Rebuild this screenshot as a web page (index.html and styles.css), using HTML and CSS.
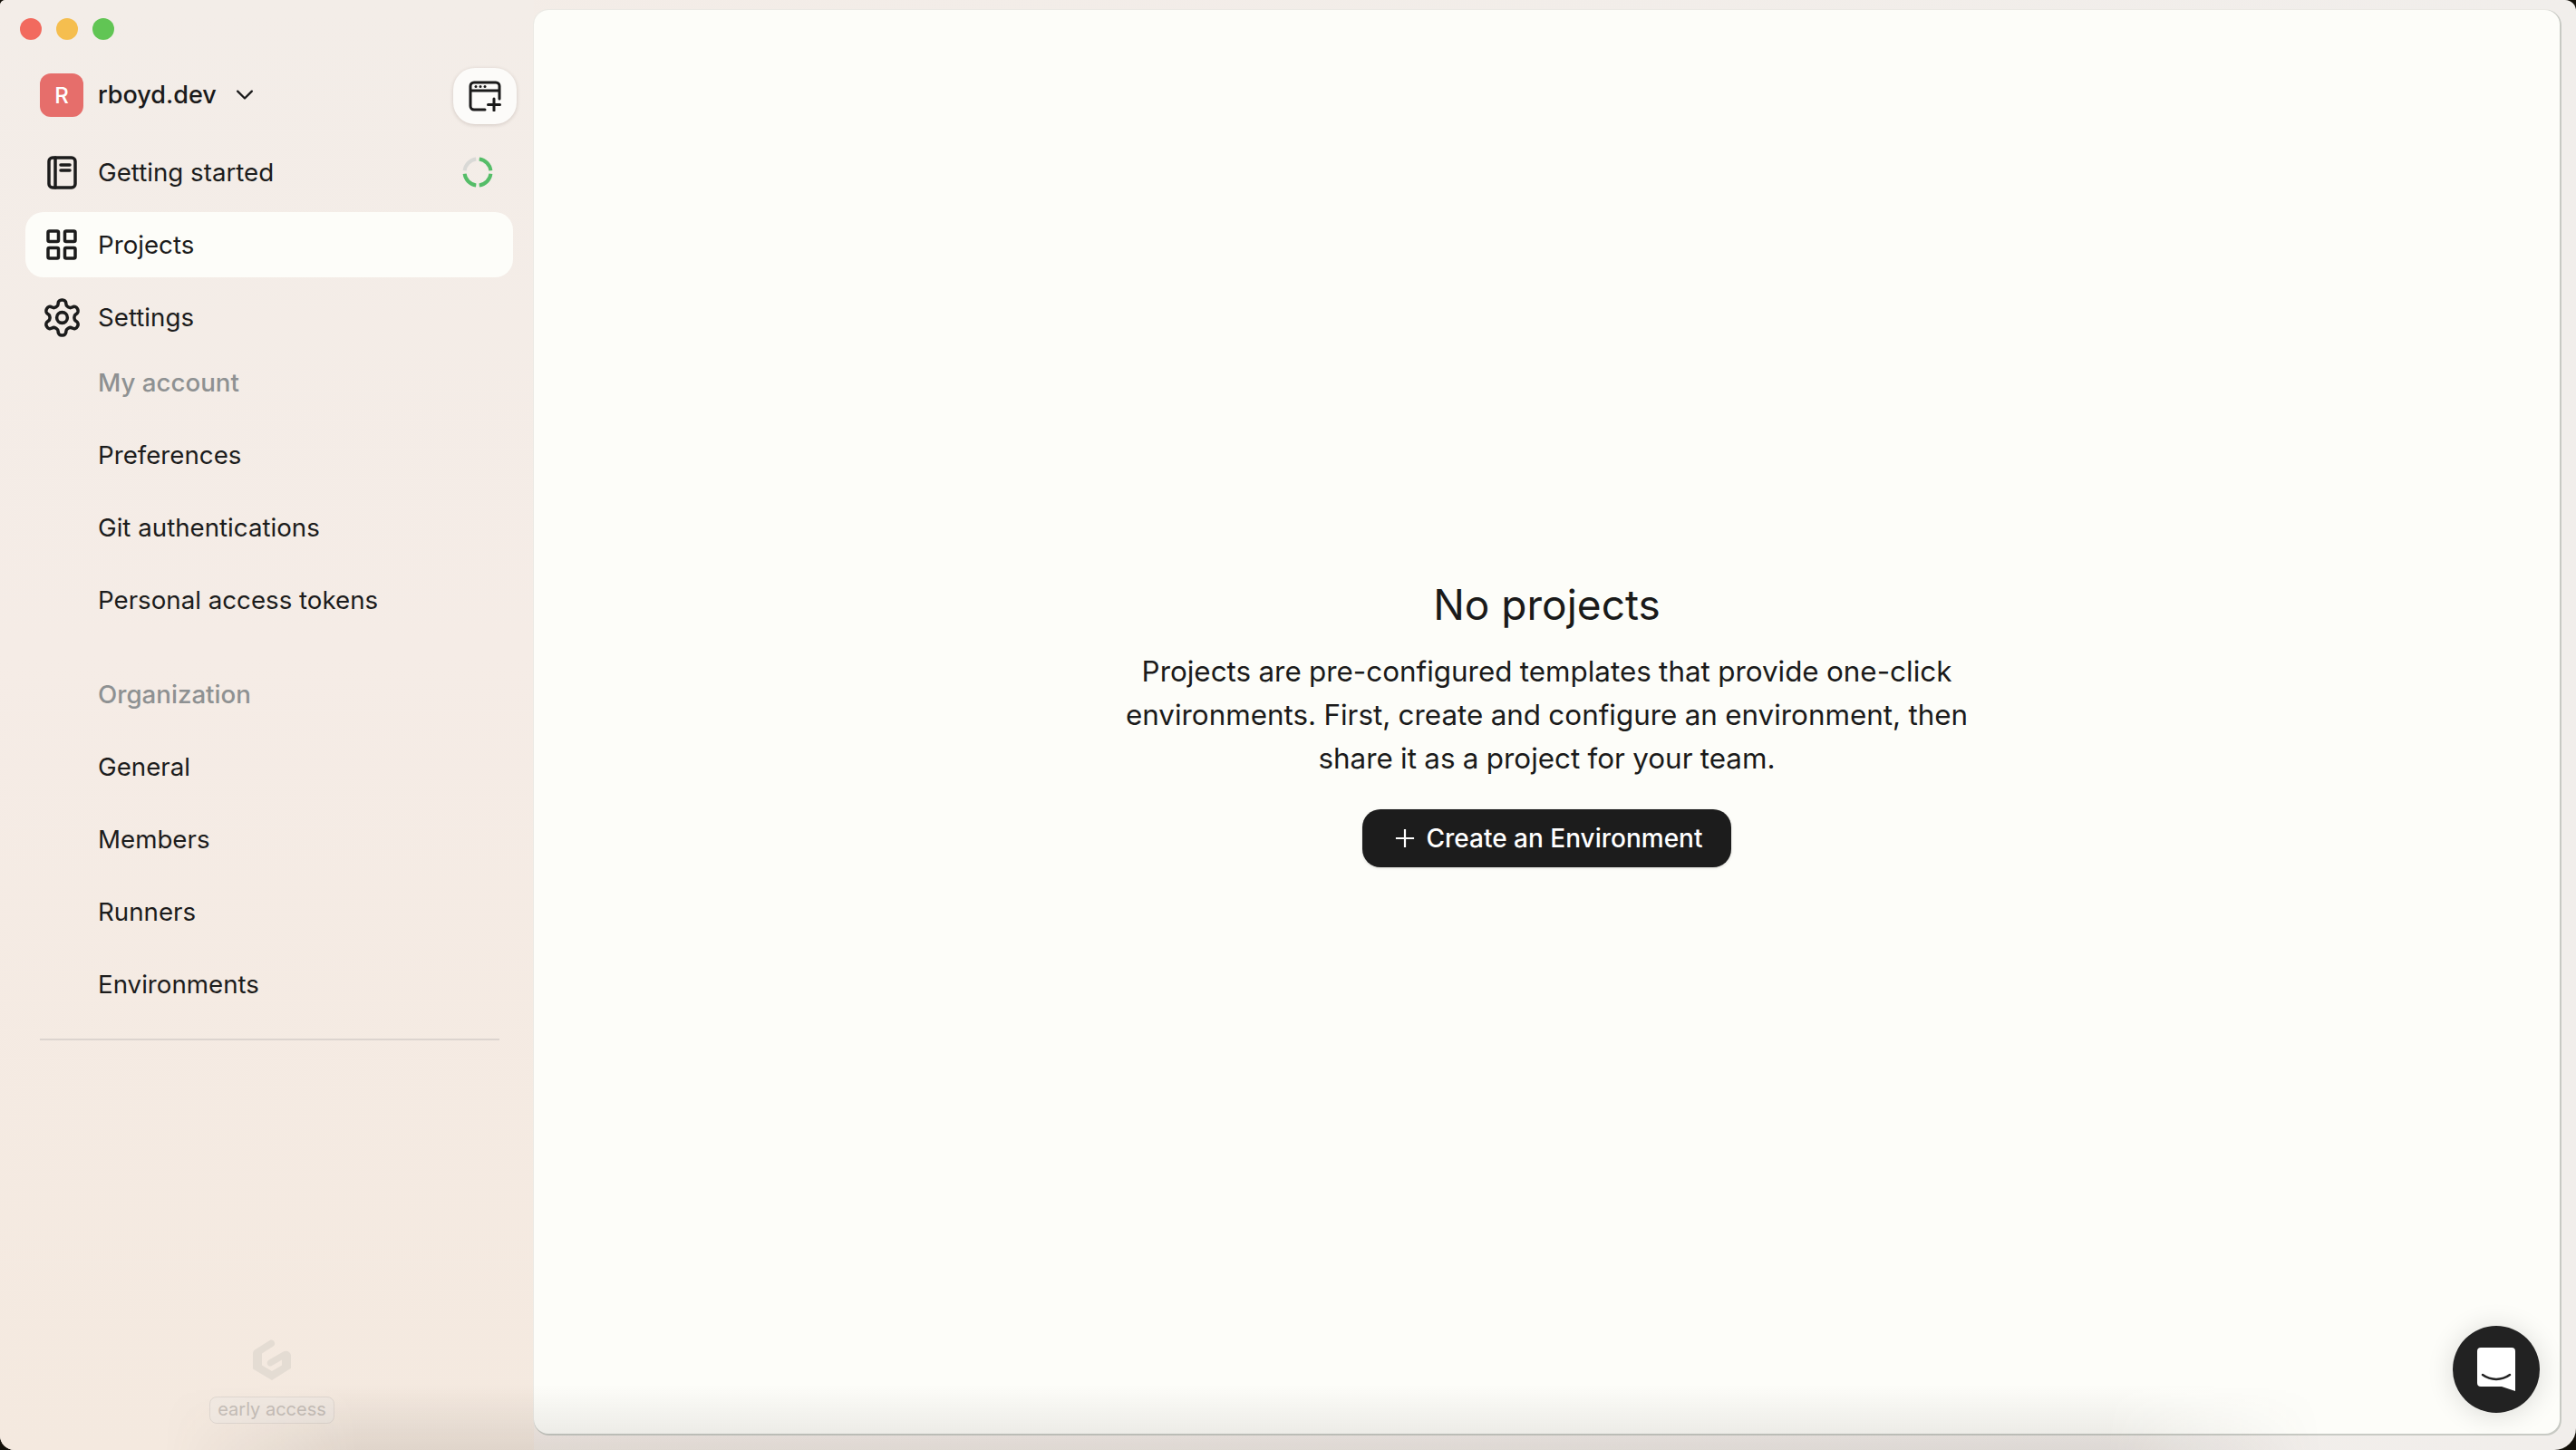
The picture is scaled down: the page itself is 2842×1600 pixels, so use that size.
FILE: index.html
```html
<!DOCTYPE html>
<html lang="en">
<head>
<meta charset="utf-8">
<title>Projects</title>
<link rel="stylesheet" href="styles.css">
</head>
<body>
<div class="window">
  <aside class="sidebar">
    <div class="traffic">
      <span class="light red"></span><span class="light yellow"></span><span class="light green"></span>
    </div>
    <div class="org-row">
      <span class="avatar">R</span>
      <span class="org-name">rboyd.dev</span>
      <svg class="chevron" viewBox="0 0 24 16"><path d="M3 3l9 9 9-9"/></svg>
      <button class="new-env">
        <svg viewBox="0 0 36 34" class="new-env-icon">
          <path d="M34 20V6a4 4 0 0 0-4-4H6a4 4 0 0 0-4 4v22a4 4 0 0 0 4 4h12M2 11h32M28 20v13M21.500 26.500h13"/>
          <circle class="dot" cx="8" cy="6.500" r="1.500"/><circle class="dot" cx="13" cy="6.500" r="1.500"/><circle class="dot" cx="18" cy="6.500" r="1.500"/>
        </svg>
      </button>
    </div>
    <nav class="nav">
      <a class="item">
        <span class="item-icon"><svg width="33" height="37" viewBox="0 0 33 37" class="ico"><rect x="2" y="2" width="29" height="33" rx="4"/><path d="M9 2v33M15 10h10M15 16h10"/></svg></span>
        <span class="label">Getting started</span>
        <svg class="progress" viewBox="0 0 34 34">
          <circle class="seg done" cx="17" cy="17" r="14.500" pathLength="100" stroke-dasharray="21 79" stroke-dashoffset="-2"/>
          <circle class="seg done" cx="17" cy="17" r="14.500" pathLength="100" stroke-dasharray="21 79" stroke-dashoffset="-27"/>
          <circle class="seg done" cx="17" cy="17" r="14.500" pathLength="100" stroke-dasharray="21 79" stroke-dashoffset="-52"/>
          <circle class="seg todo" cx="17" cy="17" r="14.500" pathLength="100" stroke-dasharray="21 79" stroke-dashoffset="-77"/>
        </svg>
      </a>
      <a class="item active">
        <span class="item-icon"><svg width="34" height="34" viewBox="0 0 34 34" class="ico"><rect x="2" y="2" width="11.500" height="11.500" rx="1.500"/><rect x="20.500" y="2" width="11.500" height="11.500" rx="1.500"/><rect x="2" y="20.500" width="11.500" height="11.500" rx="1.500"/><rect x="20.500" y="20.500" width="11.500" height="11.500" rx="1.500"/></svg></span>
        <span class="label">Projects</span>
      </a>
      <a class="item">
        <span class="item-icon"><svg width="47" height="47" viewBox="0 0 24 24" class="ico gear"><path d="M12.220 2h-.44a2 2 0 0 0-2 2v.18a2 2 0 0 1-1 1.730l-.43.25a2 2 0 0 1-2 0l-.15-.08a2 2 0 0 0-2.730.730l-.22.38a2 2 0 0 0 .73 2.730l.15.1a2 2 0 0 1 1 1.720v.51a2 2 0 0 1-1 1.740l-.15.09a2 2 0 0 0-.73 2.730l.22.38a2 2 0 0 0 2.730.730l.15-.08a2 2 0 0 1 2 0l.43.25a2 2 0 0 1 1 1.730V20a2 2 0 0 0 2 2h.44a2 2 0 0 0 2-2v-.18a2 2 0 0 1 1-1.730l.43-.25a2 2 0 0 1 2 0l.15.08a2 2 0 0 0 2.730-.73l.22-.39a2 2 0 0 0-.73-2.730l-.15-.08a2 2 0 0 1-1-1.740v-.5a2 2 0 0 1 1-1.740l.15-.09a2 2 0 0 0 .73-2.730l-.22-.38a2 2 0 0 0-2.730-.73l-.15.08a2 2 0 0 1-2 0l-.43-.25a2 2 0 0 1-1-1.730V4a2 2 0 0 0-2-2z"/><circle cx="12" cy="12" r="3"/></svg></span>
        <span class="label">Settings</span>
      </a>
      <div class="item sub heading-item group-first"><span class="label">My account</span></div>
      <a class="item sub"><span class="label">Preferences</span></a>
      <a class="item sub"><span class="label">Git authentications</span></a>
      <a class="item sub"><span class="label">Personal access tokens</span></a>
      <div class="item sub heading-item group-start"><span class="label">Organization</span></div>
      <a class="item sub"><span class="label">General</span></a>
      <a class="item sub"><span class="label">Members</span></a>
      <a class="item sub"><span class="label">Runners</span></a>
      <a class="item sub"><span class="label">Environments</span></a>
    </nav>
    <hr class="divider">
    <div class="brand">
      <svg class="logo" viewBox="0 0 44 48"><path fill-rule="evenodd" d="M3 13.500 20 2.800c3.500-2 7.500 3.800 3.500 6.800L11 17.500v13L22 37l11-6.500v-6L22 31c-4 2.500-7.500-3.500-3.500-6.300L34.500 15.500c3.500-2 8 .2 8.500 4v14.300L22 47 1 34.500V17.500c0-1.500.8-3 2-4z"/></svg>
      <span class="badge">early access</span>
    </div>
  </aside>
  <main class="panel">
    <div class="empty">
      <h1 class="empty-title">No projects</h1>
      <p class="empty-text">Projects are pre-configured templates that provide one-click environments. First, create and configure an environment, then share it as a project for your team.</p>
      <button class="cta">
        <svg class="cta-plus" viewBox="0 0 24 24"><path d="M12 1v22M1 12h22"/></svg>
        <span>Create an Environment</span>
      </button>
    </div>
    <button class="chat">
      <svg viewBox="0 0 42 48" class="chat-icon"><path d="M4 0h34a4 4 0 0 1 4 4v44l-15-5H4a4 4 0 0 1-4-4V4a4 4 0 0 1 4-4z" fill="#fff"/><path d="M6 30c9 6.500 21 6.500 30 0" fill="none" stroke="#222" stroke-width="2.500" stroke-linecap="round"/></svg>
    </button>
  </main>
  <div class="bottom-shade"></div>
</div>
</body>
</html>
```

FILE: styles.css
```css
* { box-sizing: border-box; }
html, body { margin: 0; height: 100%; background: #14110a; overflow: hidden; }
body { font-family: Inter, "Liberation Sans", sans-serif; color: #1a1a1a; }

.window {
  position: relative;
  display: flex;
  width: 2842px;
  height: 1600px;
  padding: 11px 18px 18px 0;
  border-radius: 6px 12px 24px 16px;
  overflow: hidden;
  background: linear-gradient(90deg, #f4ece6 0%, #f1eeeb 100%);
}

.sidebar {
  position: relative;
  display: flex;
  flex-direction: column;
  width: 589px;
  flex: none;
  margin: -11px 0 -18px;
  padding: 0 23px 29px 28px;
  background: linear-gradient(180deg, #f3ede8 0%, #f5ece6 45%, #f4e9df 100%);
}

.traffic { display: flex; gap: 16px; padding: 20px 0 0; margin-left: -6px; height: 68px; flex: none; }
.light { width: 24px; height: 24px; border-radius: 50%; }
.red { background: #f26a5e; }
.yellow { background: #f5be4f; }
.green { background: #61c554; }

.org-row {
  display: flex;
  align-items: center;
  height: 74px;
  padding-left: 16px;
  flex: none;
}
.avatar {
  width: 48px;
  height: 48px;
  border-radius: 12px;
  background: #e66e6b;
  color: #fff;
  font-size: 24px;
  font-weight: 500;
  display: flex;
  align-items: center;
  justify-content: center;
  flex: none;
}
.org-name { margin-left: 16px; font-size: 27px; font-weight: 500; line-height: 48px; }
.chevron { width: 22px; height: 14px; margin-left: 20px; fill: none; stroke: #1a1a1a; stroke-width: 2.600; stroke-linecap: round; stroke-linejoin: round; }
.new-env {
  margin-left: auto;
  margin-right: -4px;
  margin-top: 2px;
  width: 70px;
  height: 62px;
  padding: 0;
  border: 0;
  border-radius: 24px;
  background: #fcfbf9;
  box-shadow: 0 1px 4px rgba(60, 40, 30, .18);
  display: flex;
  align-items: center;
  justify-content: center;
}
.new-env-icon { width: 36px; height: 34px; fill: none; stroke: #1a1a1a; stroke-width: 3; stroke-linecap: round; stroke-linejoin: round; }
.new-env-icon .dot { fill: #1a1a1a; stroke: none; }

.nav { display: flex; flex-direction: column; gap: 8px; margin-top: 12px; flex: none; }
.item {
  display: flex;
  align-items: center;
  height: 72px;
  padding-left: 16px;
  border-radius: 20px;
  gap: 16px;
  font-size: 27.700px;
  line-height: 40px;
  color: #1c1c1c;
}
.item.active { background: #fdfdf9; }
.item.sub { padding-left: 80px; }
.item.heading-item { color: #8e9192; font-weight: 500; }
.item.group-first { margin-top: -8px; }
.item.group-start { margin-top: 24px; }
.item-icon { width: 48px; height: 48px; display: flex; align-items: center; justify-content: center; flex: none; }
.ico { fill: none; stroke: #1c1c1c; stroke-width: 3.500; stroke-linecap: round; stroke-linejoin: round; }
.ico.gear { stroke-width: 1.800; }
.progress { width: 34px; height: 34px; margin-left: auto; margin-right: 22px; transform: rotate(-90deg); }
.seg { fill: none; stroke-width: 4; }
.seg.done { stroke: #55bd68; }
.seg.todo { stroke: #d9d9d6; }

.divider { width: 507px; height: 2px; margin: 24px 0 0 16px; border: 0; background: #dcd4cf; flex: none; }

.brand {
  margin-top: auto;
  margin-left: 6px;
  display: flex;
  flex-direction: column;
  align-items: center;
  gap: 17px;
}
.logo { width: 44px; height: 48px; fill: #e4dcd3; }
.badge {
  height: 30px;
  padding: 0 8px;
  border: 1.500px solid #e0d8d1;
  border-radius: 8px;
  background: #f1e9e2;
  color: #c6beb8;
  font-size: 20px;
  line-height: 27px;
}

.panel {
  position: relative;
  flex: 1;
  border-radius: 16px;
  background: #fdfdf9;
  box-shadow: 1px 1px 0 1px #c8cac4, 0 0 0 1px #ebe9e4;
  display: flex;
  align-items: center;
  justify-content: center;
}
.empty { display: flex; flex-direction: column; align-items: center; text-align: center; }
.empty-title { margin: 0; font-size: 46px; font-weight: 400; line-height: 60px; color: #1a1a1a; }
.empty-text { margin: 20px 0 0; width: 950px; font-size: 31.400px; line-height: 48px; word-spacing: -.5px; color: #1a1a1a; }
.cta {
  margin-top: 32px;
  display: flex;
  align-items: center;
  justify-content: center;
  gap: 12px;
  width: 407px;
  height: 64px;
  padding: 0 0 0 5px;
  border: 0;
  border-radius: 20px;
  background: #1c1c1c;
  color: #fff;
  font-family: inherit;
  font-size: 28px;
  font-weight: 500;
  box-shadow: 0 1px 3px rgba(0, 0, 0, .15);
}
.cta-plus { width: 22px; height: 22px; fill: none; stroke: #fff; stroke-width: 2.400; }

.chat {
  position: absolute;
  right: 22px;
  bottom: 23px;
  width: 96px;
  height: 96px;
  padding: 0;
  border: 0;
  border-radius: 50%;
  background: #222;
  box-shadow: 0 2px 30px rgba(0, 0, 0, .14);
  display: flex;
  align-items: center;
  justify-content: center;
}
.chat-icon { width: 42px; height: 48px; }

.bottom-shade {
  position: absolute;
  left: 180px;
  right: 280px;
  bottom: 0;
  height: 72px;
  pointer-events: none;
  background: linear-gradient(180deg, transparent, rgba(60, 50, 40, .08) 70%, rgba(60, 50, 40, .11));
  -webkit-mask-image: linear-gradient(90deg, transparent, #000 9%, #000 90%, transparent);
  mask-image: linear-gradient(90deg, transparent, #000 9%, #000 90%, transparent);
}
```
